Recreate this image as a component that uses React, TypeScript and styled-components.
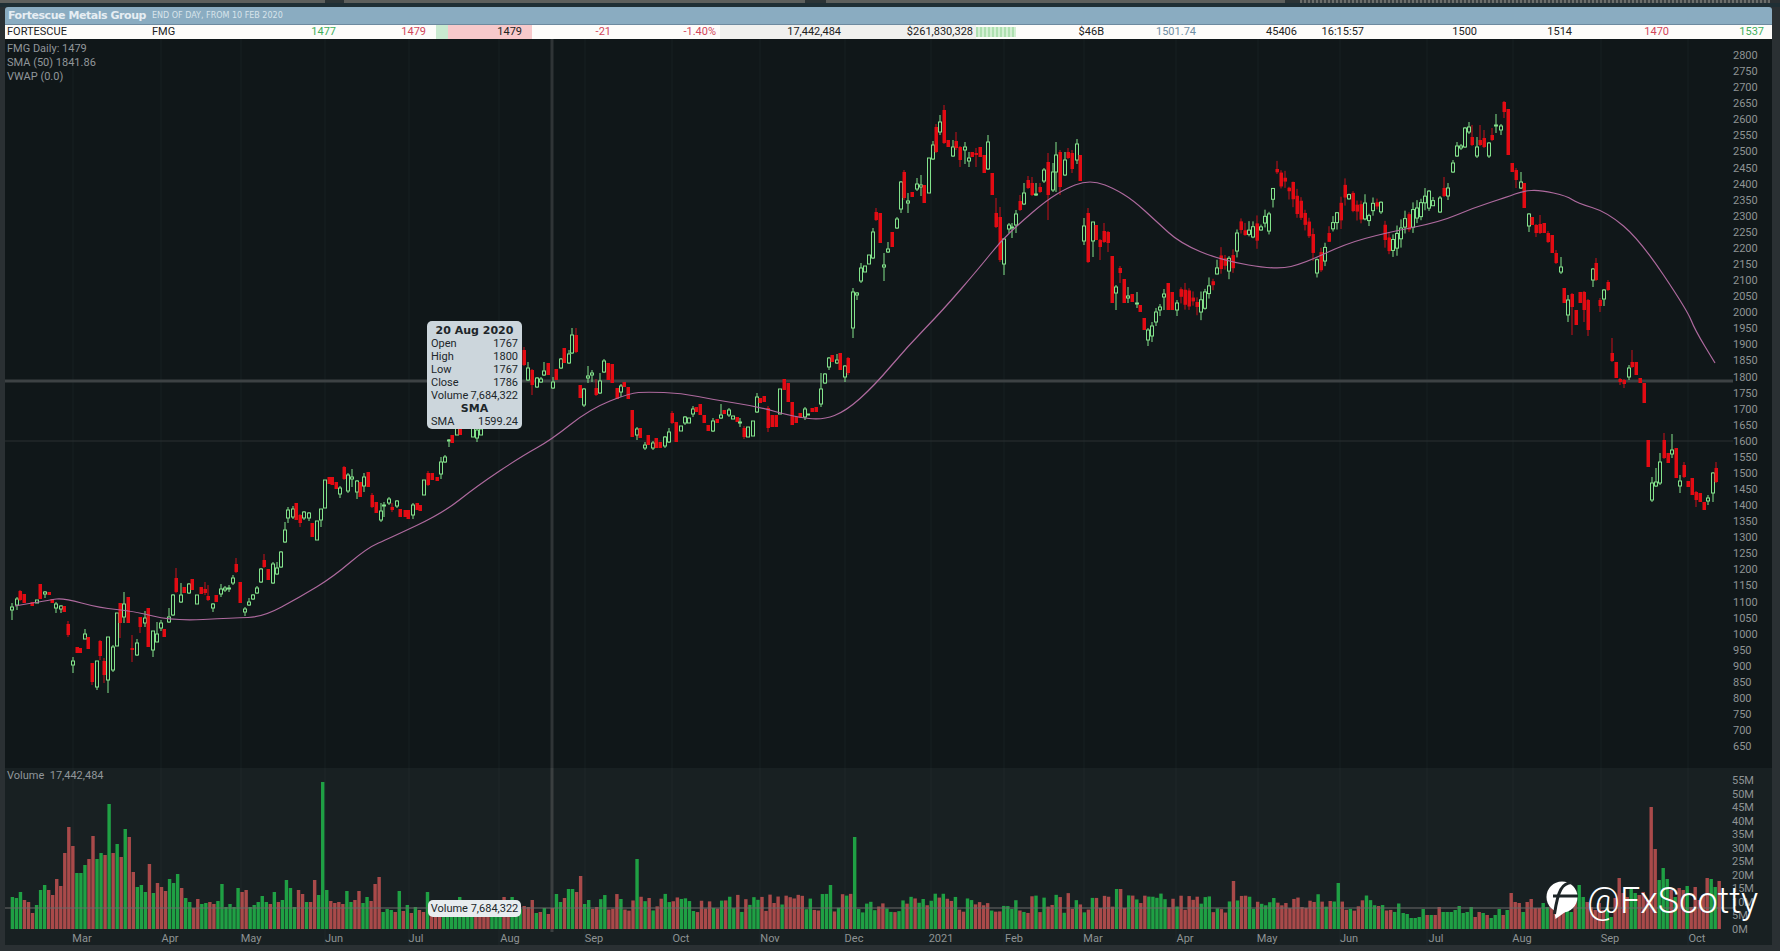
import React from "react"
import styled, { createGlobalStyle } from "styled-components"

const GlobalStyle = createGlobalStyle`
  html, body {
    margin: 0;
    height: 100%;
    overflow: hidden;
    background: #2a3033;
  }
`

// [x, bodyTop, bodyBottom, up, wickTop, wickBottom]  traced in page pixels
type Candle = [number, number, number, number, number?, number?]

const TRACED: Candle[] = [
  [12,607,610,1,603,620],[17,599,605,1,597,610],[20,591,600,0,590,601],[24,594,603,0],[32,602,606,0],[37,600,603,1],
  [40,584,599,0],[45,592,594,1,591,598],[49,592,595,0],[52,599,603,0],[56,604,608,1,602,613],[61,606,609,1,605,613],
  [64,606,612,0],[68,624,635,0,621,637],[73,661,665,1,657,673],[77,647,653,0],[80,648,653,0],[85,634,639,1,629,639],
  [88,637,649,0],[92,663,682,0,663,685],[97,661,687,1,661,690],[100,641,656,0,640,660],[104,661,675,0,658,683],
  [108,637,680,1,637,693],[113,647,670,1,645,672],[117,613,646,1],[120,603,623,0,603,638],[124,604,617,1,592,623],
  [128,597,623,0],[132,648,650,0,635,662],[137,643,655,1,639,656],[140,617,627,0,617,633],[145,618,623,1,611,627],
  [148,608,647,0],[153,631,650,1,631,657],[157,634,642,1,622,642],[161,623,628,1,620,631],[164,629,637,0],
  [169,617,622,1,608,623],[173,595,615,1,594,616],[176,578,592,0,568,593],[181,595,602,1,583,603],[184,587,593,0],
  [189,584,593,1,583,594],[192,579,590,0],[197,595,604,1],[201,587,594,0],[205,589,593,0,582,595],[208,596,600,0,585,601],
  [213,604,608,1,603,612],[216,595,602,0],[221,589,594,1,584,597],[225,588,590,1,586,592],[229,588,589,1,585,592],
  [233,578,583,1,575,585],[236,564,572,0,558,573],[240,582,603,0],[245,609,612,1,607,616],[249,602,605,1,598,606],
  [253,595,599,1,594,600],[257,588,593,1,586,594],[261,569,582,1,568,583],[264,560,567,0,554,568],[268,569,580,0],
  [273,564,583,1,562,584],[277,568,574,1,562,575],[281,552,567,1,551,568],[285,530,542,1,522,543],[288,510,518,1,507,523],
  [293,509,517,1,506,519],[296,503,520,0],[300,515,523,0,514,527],[304,512,518,1,511,520],[309,513,518,1,512,521],
  [312,523,537,0],[317,521,540,1],[321,509,520,1,509,527],[325,480,508,1],[329,477,484,0],[332,477,485,0],[336,482,489,0],
  [340,488,494,1,486,498],[344,467,479,0,466,480],[348,475,491,1,473,493],[352,477,479,1,469,487],[357,481,492,1,480,499],
  [360,482,497,0],[364,477,486,1,473,492],[368,472,487,0],[372,495,507,0,493,508],[376,502,513,0],[381,511,520,1,503,522],
  [384,505,506,1,502,517],[389,499,503,1,497,505],[392,507,510,0,503,512],[397,501,506,1,500,508],[400,509,517,0],
  [405,510,517,0],[408,510,519,0],[413,505,515,1,503,519],[417,503,510,0],[420,505,511,0],[424,480,495,1],[428,473,485,0,471,486],
  [432,473,480,0],[437,477,481,0],[441,462,474,1,457,479],[445,457,462,1,455,463],[449,440,441,1,439,447],[452,435,443,0],
  [457,428,435,1],[460,427,435,0],[473,428,437,1],[477,430,438,1,428,442],[481,429,435,1],
  [524,350,365,0,347,366],[528,368,380,1,362,381],[532,370,385,0,369,395],[537,378,387,1,377,388],[541,379,382,1,377,383],
  [544,371,375,1,362,376],[548,363,375,0],[553,382,388,1,377,389],[556,369,380,0],[561,359,368,1,358,369],[564,348,363,0],
  [569,354,363,1,350,364],[572,335,353,1,328,354],[576,335,352,0,328,353],[580,385,398,0],[584,389,405,1,388,407],
  [588,376,378,1,366,383],[592,373,375,1,370,382],[596,388,395,0,379,396],[600,381,393,1,373,394],[604,361,372,1,359,373],
  [608,363,380,0],[612,364,383,0],[617,388,399,0],[621,386,392,1,384,397],[624,382,387,0],[628,387,399,0],[632,410,437,0],
  [637,429,435,1,427,440],[640,428,438,0],[645,445,448,1,442,450],[648,435,445,0],[653,443,448,1,441,450],[656,438,448,0],
  [660,442,448,0],[665,437,446,1,436,448],[669,432,442,1,428,443],[672,413,423,0,411,424],[676,422,442,0],[681,426,431,1],
  [685,417,423,1,416,425],[689,418,423,1],[693,409,414,1,406,417],[696,407,412,0],[700,404,415,0],[704,415,423,0],
  [708,425,431,0],[713,421,431,1,418,432],[717,419,423,0],[721,415,418,1,404,419],[724,410,414,0],[729,410,415,1,408,417],
  [733,416,419,1],[737,417,422,0],[740,422,423,1,418,427],[744,428,437,0,426,439],[748,427,437,1],[753,421,436,1],
  [757,397,412,1,393,413],[760,398,403,0],[764,396,402,0],[768,408,428,0,406,432],[772,415,427,0],[776,415,427,0],
  [780,389,414,1],[784,379,390,0],[788,383,402,0],[792,402,425,0],[796,417,423,0],[800,413,418,0],[805,409,417,1,407,420],
  [808,414,415,1],[812,408,412,0],[816,407,412,0],[821,389,404,1,373,407],[825,374,383,1,373,384],[829,358,367,1,357,370],
  [832,355,362,0],[837,360,363,1,354,364],[840,353,370,0],[845,366,377,1,365,382],[848,358,373,0,357,375],
  [853,292,328,1,288,338],[857,293,295,1,292,300],[861,268,281,1,263,283],[865,266,272,1],[869,255,264,1],[873,232,258,1,228,259],
  [876,212,220,0,208,221],[880,213,243,0],[884,265,267,1,253,281],[888,249,252,1,242,253],[892,232,247,0],[897,219,228,1,217,229],
  [901,182,209,1,181,213],[904,172,198,0,170,200],[908,201,203,1,193,213],[912,192,197,0],[917,184,189,1,178,191],
  [921,185,187,1,175,196],[924,185,203,0],[929,158,193,1],[933,145,159,1,141,160],[936,127,152,0,124,153],[940,122,132,1,115,135],
  [944,110,143,0,105,144],[948,140,147,0],[953,147,156,1,140,157],[956,141,148,0,132,150],[960,147,160,0,146,167],
  [965,147,150,1,142,164],[969,158,161,1,152,167],[972,152,157,0],[976,153,155,0,148,167],[980,147,157,0],[984,155,173,0],
  [988,142,169,1,135,170],[992,173,195,0],[996,213,227,0,198,228],[1000,217,260,0,207,262],[1004,239,264,1,238,275],
  [1009,225,229,1,223,233],[1012,227,228,1,223,238],[1016,214,225,1,210,233],[1020,201,210,0,195,211],[1024,193,204,1,183,205],
  [1028,180,188,0,176,189],[1032,183,195,0,177,196],[1036,194,195,1,183,196],[1040,187,192,0,183,193],[1044,170,181,1,168,183],
  [1048,162,195,0,153,220],[1053,172,190,1,163,192],[1056,155,172,1,142,192],[1060,152,187,0,150,195],[1065,160,175,1,152,176],
  [1068,152,158,0,148,159],[1072,153,169,0,150,173],[1077,144,160,1,139,164],[1080,155,181,0],
  [1084,226,241,1,218,245],[1088,213,262,0,208,263],[1093,222,241,1,222,257],[1096,225,240,0],[1100,240,247,0,239,260],
  [1104,231,242,0,223,243],[1108,232,243,0,231,252],[1112,256,303,0],[1116,287,293,1,285,310],[1120,268,273,0,266,283],
  [1124,279,303,0],[1128,296,298,1,287,303],[1132,294,302,0],[1137,303,304,1,292,308],[1140,305,312,0],
  [1144,318,330,0],[1148,330,340,1,328,346],[1152,326,336,1,322,342],[1156,312,322,1,308,326],[1160,307,310,1,304,316],
  [1164,294,297,1,289,310],[1168,283,310,0],[1172,292,310,0],[1177,303,310,1,300,316],
  [1440,198,212,1,196,213],[1444,188,196,0,177,197],[1448,188,196,1,183,200],[1453,163,172,1,160,173],[1457,146,156,1,142,157],
  [1461,146,148,1,144,150],[1465,128,147,1,127,148],[1469,127,132,1,122,134],[1472,137,145,0,125,146],[1477,147,156,1,137,158],
  [1480,140,145,0,125,146],[1484,138,147,0,130,148],[1489,143,156,1,142,158],[1492,135,140,0,128,141],[1496,125,126,1,114,133],
  [1501,126,130,1,124,135],[1504,102,112,0,101,118],[1508,109,155,0],[1512,163,172,0],[1516,170,180,0,168,188],[1521,182,188,1,172,189],
  [1524,183,208,0],[1529,214,226,1,213,232],[1532,217,225,0],[1536,225,233,0,224,237],[1540,224,233,0,215,234],[1544,223,233,0],
  [1548,233,242,0,231,243],[1552,235,253,0],[1556,253,263,0,250,264],[1561,267,272,1,257,274],[1564,288,303,0],[1568,300,315,1,295,322],
  [1572,294,307,0,293,335],[1576,310,325,0],[1580,292,303,0],[1584,292,310,0,291,322],[1588,300,330,0,299,336],[1593,269,280,1,268,287],
  [1596,263,280,0,258,281],[1600,300,306,0,298,312],[1604,290,299,1,289,306],[1608,282,290,0,280,291],
  [1612,353,361,0,338,362],[1616,362,378,0],[1620,379,382,0,378,385],[1624,380,384,0,379,388],[1629,368,377,1,365,380],
  [1632,362,367,0,350,368],[1636,362,375,0],[1640,378,383,0],[1644,383,403,0],[1648,440,467,0],[1652,483,500,1,477,502],
  [1656,482,486,1,468,487],[1660,462,483,1,453,485],[1664,440,458,0,433,459],[1668,453,463,0],[1672,450,454,1,434,458],
  [1676,448,478,0],[1680,481,486,1,475,493],[1684,465,477,0,462,478],[1688,481,487,0],[1692,478,495,0],[1696,492,500,0,491,507],
  [1700,493,502,0],[1704,502,510,0],[1708,498,501,1,495,505],[1713,473,493,1,472,502],[1716,468,482,0,462,483],
]

// no crop reached this stretch, so it follows the close as read from the full picture
const CLOSE_PATH = [
  [1180, 297], [1192, 297], [1203, 306], [1212, 284], [1220, 263], [1232, 267], [1240, 227], [1249, 233],
  [1260, 227], [1269, 221], [1276, 168], [1285, 182], [1294, 195], [1303, 216], [1309, 227], [1317, 263],
  [1324, 259], [1330, 233], [1339, 216], [1345, 195], [1356, 210], [1368, 216], [1379, 202], [1387, 238],
  [1394, 247], [1402, 227], [1413, 216], [1425, 202], [1436, 199],
]

let seed = 7
const rnd = () => {
  seed = (seed * 16807) % 2147483647
  return seed / 2147483647
}

const closeAt = (x: number) => {
  for (let i = 1; i < CLOSE_PATH.length; i++) {
    const [x0, y0] = CLOSE_PATH[i - 1]
    const [x1, y1] = CLOSE_PATH[i]
    if (x <= x1) return y0 + ((y1 - y0) * (x - x0)) / (x1 - x0)
  }
  return 199
}

const FILLED: Candle[] = []
for (let x = 1181; x < 1437; x += 4) {
  const close = closeAt(x) + (rnd() - 0.5) * 8
  const rising = closeAt(x + 4) < closeAt(x)
  const up = rnd() < (rising ? 0.7 : 0.3) ? 1 : 0
  const size = 3 + rnd() * 16
  FILLED.push([x, close - size / 2, close + size / 2, up, close - size / 2 - rnd() * 9, close + size / 2 + rnd() * 9])
}

const CANDLES = [...TRACED, ...FILLED]

const SMA = [
  [15, 606], [50, 600], [63, 598], [100, 608], [133, 611], [173, 621], [233, 618], [263, 617], [300, 597], [333, 577],
  [367, 548], [390, 538], [443, 513], [477, 486], [522, 456], [551, 440], [590, 409], [630, 393], [647, 392], [681, 393],
  [715, 400], [755, 406], [795, 417], [823, 420], [846, 411], [874, 386], [908, 346], [943, 310], [980, 267], [1000, 242],
  [1020, 223], [1047, 200], [1067, 188], [1083, 182], [1097, 182], [1113, 188], [1133, 200], [1157, 222], [1180, 243],
  [1220, 260], [1277, 270], [1305, 263], [1345, 244], [1385, 233], [1440, 222], [1473, 208], [1507, 197], [1523, 191],
  [1540, 190], [1567, 196], [1577, 203], [1607, 212], [1640, 240], [1687, 310], [1695, 330], [1715, 363],
]

// midpoint smoothing, the traced points are sparse
const smaPath = SMA.reduce((d, p, i) => {
  if (i === 0) return `M${p[0]} ${p[1]}`
  if (i === SMA.length - 1) return `${d} L${p[0]} ${p[1]}`
  const next = SMA[i + 1]
  return `${d} Q${p[0]} ${p[1]} ${(p[0] + next[0]) / 2} ${(p[1] + next[1]) / 2}`
}, "")

// volume: height in px, negative for a down day
const VOLUME_START = [
  32,31,37,-29,-27,-16,24,39,44,-39,-34,-50,-43,-76,-102,-83,56,56,64,-70,-93,70,76,-74,125,-76,85,-72,100,-92,-57,42,44,37,
  -65,36,-46,-42,-38,50,46,55,-41,31,27,-21,-30,25,26,-27,-25,28,45,22,25,22,41,-37,-39,22,24,27,33,27,-25,37,-27,29,49,41,22,
  -39,-35,27,-27,-49,34,147,39,-28,-26,-27,-25,38,27,-29,-38,26,32,-28,-45,-52,17,20,19,-17,38,-18,24,-16,22,-19,-17,37,
  -20,-18,-22,20,20,20,20,32,20,20,22,-20,-18,-18,-20,20,22,20,-32,-20,32,22,20,
  -23,-22,-29,16,-17,21,-15,-21,35,27,-31,40,40,-37,-53,25,29,-20,-22,
]
const VOLUME_LATE = [
  16,15,11,11,12,20,-14,14,-14,-22,17,17,17,19,23,16,17,22,-12,-17,16,-14,11,14,20,-14,19,
  -36,-27,-26,17,-27,-30,-21,-21,26,22,-24,-26,-19,-29,24,17,-36,44,32,-27,-22,-19,-26,-19,22,12,-31,-51,-36,-32,41,36,-34,-37,
  -29,-122,-80,49,61,50,-39,32,-41,-39,43,-22,-42,-29,-34,-51,50,42,-48,
]
const VOLUME_SPIKES: Record<number, number> = { 637: 70, 853: 92, 829: 44, 1230: 48, 1117: 40, 1337: 46 }

const nearestUp = (x: number) => {
  let best = CANDLES[0]
  for (const c of CANDLES) if (Math.abs(c[0] - x) < Math.abs(best[0] - x)) best = c
  return best[3] === 1
}

const VOLUME: { x: number; h: number; up: boolean }[] = []
VOLUME_START.forEach((v, i) => VOLUME.push({ x: 10.7 + i * 4.03, h: Math.abs(v), up: v > 0 }))
for (let x = 10.7 + VOLUME_START.length * 4.03; x < 1400; x += 4.03) {
  let h = 16 + rnd() * 20
  for (const key in VOLUME_SPIKES) if (Math.abs(Number(key) - x) < 2.1) h = VOLUME_SPIKES[key]
  VOLUME.push({ x, h, up: nearestUp(x) })
}
VOLUME_LATE.forEach((v, i) => VOLUME.push({ x: 1401.5 + i * 4, h: Math.abs(v), up: v > 0 }))

const MONTHS = [
  ["Mar", 82], ["Apr", 170], ["May", 251], ["Jun", 334], ["Jul", 416], ["Aug", 510], ["Sep", 594], ["Oct", 681], ["Nov", 770],
  ["Dec", 854], ["2021", 941], ["Feb", 1014], ["Mar", 1093], ["Apr", 1185], ["May", 1267], ["Jun", 1349], ["Jul", 1436],
  ["Aug", 1522], ["Sep", 1610], ["Oct", 1697],
] as const

const GRID_X = [73, 161, 241, 325, 409, 499, 585, 672, 760, 845, 931, 1004, 1084, 1176, 1258, 1340, 1427, 1513, 1601, 1688]

const PRICES: number[] = []
for (let p = 2800; p >= 650; p -= 50) PRICES.push(p)

const priceY = (p: number) => 55 + (2800 - p) * 0.3215

const Page = styled.div`
  width: 1780px;
  height: 951px;
  display: flex;
  flex-direction: column;
  position: relative;
  overflow: hidden;
  background: #2a3033;
  font-family: Roboto, "Liberation Sans", sans-serif;
`

const TopStrip = styled.div`
  height: 3px;
  display: flex;
  flex-shrink: 0;
`

const StripPart = styled.div<{ $w: number; $kind: "gray" | "dark" | "dots" }>`
  width: ${(p) => p.$w}px;
  background: ${(p) =>
    p.$kind === "gray"
      ? "#5e605d"
      : p.$kind === "dark"
        ? "#2c3436"
        : "repeating-linear-gradient(90deg, #6b6d6a 0 2px, #3c4143 2px 4px)"};
`

const TopGap = styled.div`
  height: 4px;
  flex-shrink: 0;
  background: #1f2f35;
`

const Window = styled.div`
  margin: 0 8px 0 5px;
  width: 1767px;
  display: flex;
  flex-direction: column;
`

const TitleBar = styled.div`
  height: 17px;
  background: #8aacc1;
  border-radius: 3px 3px 0 0;
  border-bottom: 1px solid #6d8a9f;
  display: flex;
  align-items: center;
  padding-left: 3px;
  gap: 6px;
`

const TitleName = styled.span`
  font: bold 11px "DejaVu Sans", sans-serif;
  color: #e6eef3;
  letter-spacing: -0.45px;
`

const TitleNote = styled.span`
  font: 8px "DejaVu Sans", sans-serif;
  color: #d8e4eb;
`

const QuoteRow = styled.div`
  height: 14px;
  display: flex;
  background: #fdfcfa;
  font-size: 11px;
  line-height: 14px;
  color: #222;
`

const Cell = styled.div<{ $w: number; $pad?: number; $left?: boolean; $bg?: string; $color?: string }>`
  width: ${(p) => p.$w}px;
  box-sizing: border-box;
  text-align: ${(p) => (p.$left ? "left" : "right")};
  padding: ${(p) => (p.$left ? `0 0 0 ${p.$pad ?? 2}px` : `0 ${p.$pad ?? 4}px 0 0`)};
  background: ${(p) => p.$bg ?? "transparent"};
  color: ${(p) => p.$color ?? "#222"};
  white-space: nowrap;
`

const TurnoverBar = styled.div`
  width: 40px;
  margin: 2px 0;
  background: repeating-linear-gradient(90deg, #aee0b0 0 2px, #d3efd3 2px 4px);
`

const PricePanel = styled.div`
  height: 729px;
  position: relative;
  background: #101719;
`

const VolumePanel = styled.div`
  height: 177px;
  position: relative;
  background: #182022;
`

const Plot = styled.svg`
  display: block;
`

const AxisText = styled.text`
  font: 11px Roboto, "Liberation Sans", sans-serif;
  fill: #8e9394;
`

const Legend = styled.div`
  position: absolute;
  left: 2px;
  top: 3px;
  font-size: 11px;
  line-height: 14px;
  color: #90969a;
`

const VolumeLegend = styled(Legend)`
  top: 1px;
`

const DataTip = styled.div`
  position: absolute;
  left: 422px;
  top: 282px;
  width: 95px;
  height: 108px;
  box-sizing: border-box;
  padding: 3px 4px;
  border-radius: 5px;
  background: #ccd6dc;
  color: #20262a;
  font-size: 11px;
  line-height: 13px;
`

const TipHead = styled.div`
  text-align: center;
  font: bold 11px/13px "DejaVu Sans", sans-serif;
`

const TipRow = styled.div`
  display: flex;
  justify-content: space-between;
  white-space: nowrap;
`

const VolumeTip = styled.div`
  position: absolute;
  left: 423px;
  top: 132px;
  width: 93px;
  height: 17px;
  border-radius: 5px;
  background: #e8ecef;
  color: #20262a;
  font-size: 11px;
  line-height: 17px;
  text-align: center;
  white-space: nowrap;
`

const Watermark = styled.div`
  position: absolute;
  left: 1545px;
  top: 881px;
  display: flex;
  align-items: center;
  gap: 6px;
  color: #fff;
  font: 300 36px/38px Roboto, sans-serif;
`

const quoteCells = [
  { w: 146, left: true, pad: 2, text: "FORTESCUE" },
  { w: 105, left: true, pad: 1, text: "FMG" },
  { w: 84, text: "1477", color: "#3fae5b" },
  { w: 90, text: "1479", color: "#d2475a" },
  { w: 6, text: "" },
  { w: 12, text: "", bg: "#c9ead0" },
  { w: 84, pad: 10, text: "1479", bg: "#f7c9cb" },
  { w: 84, pad: 5, text: "-21", color: "#d2475a" },
  { w: 104, text: "-1.40%", color: "#d2475a" },
  { w: 125, text: "17,442,484", bg: "#f0f0ee" },
  { w: 131, pad: 3, text: "$261,830,328", bg: "#f0f0ee" },
]

const quoteCellsAfter = [
  { w: 92, text: "$46B" },
  { w: 92, text: "1501.74", color: "#6f8ea3" },
  { w: 100, pad: 3, text: "45406" },
  { w: 68, text: "16:15:57" },
  { w: 112, pad: 3, text: "1500" },
  { w: 95, pad: 3, text: "1514" },
  { w: 97, pad: 3, text: "1470", color: "#d2475a" },
  { w: 100, pad: 8, text: "1537", color: "#3fae5b" },
]

const tipRows = [
  ["Open", "1767"],
  ["High", "1800"],
  ["Low", "1767"],
  ["Close", "1786"],
  ["Volume", "7,684,322"],
]

const renderCell = (c: { w: number; left?: boolean; pad?: number; text: string; color?: string; bg?: string }, i: number) => (
  <Cell key={i} $w={c.w} $left={c.left} $pad={c.pad} $color={c.color} $bg={c.bg}>
    {c.text}
  </Cell>
)

const CandleMark = ({ c }: { c: Candle }) => {
  const [x, top, bottom, up, wickTop, wickBottom] = c
  const stroke = up ? "#83e48c" : "#c8111a"
  return (
    <g>
      <line x1={x} x2={x} y1={wickTop ?? top} y2={wickBottom ?? bottom} stroke={stroke} strokeWidth={1} />
      {up ? (
        <rect x={x - 1.5} y={top} width={3} height={Math.max(bottom - top, 1)} fill="#101719" stroke="#83e48c" strokeWidth={1} />
      ) : (
        <rect x={x - 1.5} y={top} width={3.5} height={bottom - top} fill="#e30b13" />
      )}
    </g>
  )
}

const PriceChart = () => (
  <Plot width={1767} height={729} viewBox="5 39 1767 729">
    {GRID_X.map((x) => (
      <line key={x} x1={x} x2={x} y1={39} y2={768} stroke="#172022" />
    ))}
    <line x1={5} x2={1733} y1={441} y2={441} stroke="#2a3032" />
    <line x1={5} x2={1733} y1={381} y2={381} stroke="#3d4244" strokeWidth={3} />
    <line x1={552} x2={552} y1={39} y2={768} stroke="#2f3436" strokeWidth={3} />
    {CANDLES.map((c, i) => (
      <CandleMark key={i} c={c} />
    ))}
    <path d={smaPath} fill="none" stroke="#ae6a9e" strokeWidth={1.2} />
    {PRICES.map((p) => (
      <AxisText key={p} x={1733} y={priceY(p) + 4}>
        {p}
      </AxisText>
    ))}
  </Plot>
)

const VolumeChart = () => (
  <Plot width={1767} height={177} viewBox="5 768 1767 177">
    {GRID_X.map((x) => (
      <line key={x} x1={x} x2={x} y1={768} y2={945} stroke="#1e2729" />
    ))}
    <line x1={552} x2={552} y1={768} y2={932} stroke="#3a3f40" strokeWidth={3} />
    {VOLUME.map((b, i) => (
      <rect key={i} x={b.x} y={929 - b.h} width={3.4} height={b.h} fill={b.up ? "#1fa044" : "#a94a4a"} />
    ))}
    <line x1={5} x2={1733} y1={908} y2={908} stroke="#6a6a6a" strokeOpacity={0.5} strokeWidth={2} />
    {MONTHS.map(([label, x], i) => (
      <AxisText key={i} x={x} y={942} textAnchor="middle">
        {label}
      </AxisText>
    ))}
    {Array.from({ length: 12 }, (_, i) => (
      <AxisText key={i} x={1732} y={933 - i * 13.55}>
        {`${i * 5}M`}
      </AxisText>
    ))}
  </Plot>
)

const BubbleLogo = () => (
  <svg width="36" height="40" viewBox="0 0 36 40">
    <circle cx="17" cy="16" r="15.5" fill="#fff" />
    <path d="M9 27 L10.5 38 L23 29 Z" fill="#fff" />
    <path d="M27 1.5 C17 2 13 9 9.5 33" fill="none" stroke="#1d2527" strokeWidth="3" />
    <path d="M8 15 H33" stroke="#1d2527" strokeWidth="3" />
  </svg>
)

export default function App() {
  return (
    <Page>
      <GlobalStyle />
      <TopStrip>
        <StripPart $w={325} $kind="gray" />
        <StripPart $w={19} $kind="dark" />
        <StripPart $w={461} $kind="gray" />
        <StripPart $w={21} $kind="dark" />
        <StripPart $w={459} $kind="gray" />
        <StripPart $w={15} $kind="dark" />
        <StripPart $w={470} $kind="dots" />
      </TopStrip>
      <TopGap />
      <Window>
        <TitleBar>
          <TitleName>Fortescue Metals Group</TitleName>
          <TitleNote>END OF DAY, FROM 10 FEB 2020</TitleNote>
        </TitleBar>
        <QuoteRow>
          {quoteCells.map(renderCell)}
          <TurnoverBar />
          {quoteCellsAfter.map(renderCell)}
        </QuoteRow>
        <PricePanel>
          <PriceChart />
          <Legend>
            <div>FMG Daily: 1479</div>
            <div>SMA (50) 1841.86</div>
            <div>VWAP (0.0)</div>
          </Legend>
          <DataTip>
            <TipHead>20 Aug 2020</TipHead>
            {tipRows.map(([k, v]) => (
              <TipRow key={k}>
                <span>{k}</span>
                <span>{v}</span>
              </TipRow>
            ))}
            <TipHead>SMA</TipHead>
            <TipRow>
              <span>SMA</span>
              <span>1599.24</span>
            </TipRow>
          </DataTip>
        </PricePanel>
        <VolumePanel>
          <VolumeChart />
          <VolumeLegend>Volume&nbsp; 17,442,484</VolumeLegend>
          <VolumeTip>Volume 7,684,322</VolumeTip>
        </VolumePanel>
      </Window>
      <Watermark>
        <BubbleLogo />
        <span>@FxScotty</span>
      </Watermark>
    </Page>
  )
}
